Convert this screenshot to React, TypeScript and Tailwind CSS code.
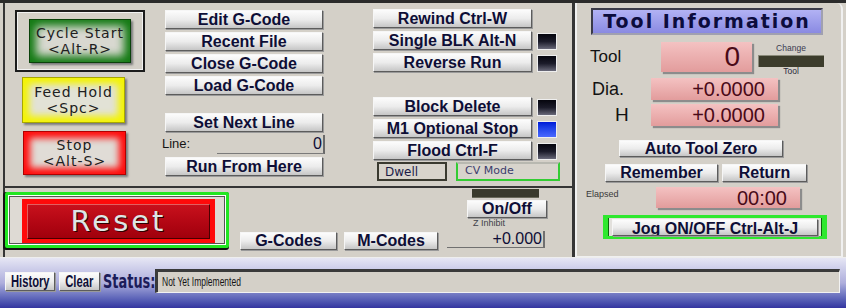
const btn =
  "flex items-center justify-center whitespace-nowrap overflow-hidden bg-linear-to-b from-[#fcfcfc] via-[#ececec] to-[#c6c6c6] border border-[#f6f6f6] border-r-[#5c5c5c] border-b-[#5c5c5c] shadow-[1px_1px_0_#9a9a9a] text-[16px] font-bold leading-none text-[#0e0e36]";

function Btn({ label, className }: { label: string; className: string }) {
  return <div className={`${btn} ${className}`}>{label}</div>;
}

function Led({ blue }: { blue?: boolean }) {
  return (
    <div
      className={
        blue
          ? "ml-[5px] w-[20px] h-[17px] border border-[#eeeeee] bg-linear-to-b from-[#0018d8] to-[#4a68ff]"
          : "ml-[5px] w-[20px] h-[17px] border border-[#eeeeee] bg-linear-to-b from-[#06060e] via-[#1c1c2a] to-[#6a6a7a]"
      }
    />
  );
}

function Dro({ value, className }: { value: string; className: string }) {
  return (
    <div
      className={`flex items-center justify-end bg-linear-to-b from-[#f4c2c2] to-[#e29c9c] shadow-[2px_2px_1px_#8c8c8c] text-[#4a0a18] leading-none ${className}`}
    >
      {value}
    </div>
  );
}

export default function App() {
  const colC = [
    { label: "Rewind Ctrl-W", mt: "mt-[6px]", led: false },
    { label: "Single BLK Alt-N", mt: "mt-[3px]", led: true },
    { label: "Reverse Run", mt: "mt-[3px]", led: true },
    { label: "Block Delete", mt: "mt-[25px]", led: true },
    { label: "M1 Optional Stop", mt: "mt-[3px]", led: true, blue: true },
    { label: "Flood Ctrl-F", mt: "mt-[3px]", led: true },
  ];

  return (
    <div className="w-[846px] h-[308px] overflow-hidden bg-[#d4d0c8] font-['Liberation_Sans',Arial,sans-serif] flex flex-col">
      <div className="flex h-[257px] border-t-[3px] border-[#2b2b2b]">
        {/* left column */}
        <div className="w-[575px] flex flex-col pl-[3px]">
          {/* program run panel */}
          <div className="h-[185px] flex border-l-2 border-r-[3px] border-b-2 border-[#353535]">
            {/* big buttons */}
            <div className="ml-[10px] w-[130px] flex flex-col font-['DejaVu_Sans',sans-serif] text-[14px] leading-[16px] tracking-[1px] text-[#202020]">
              <div className="mt-[7px] h-[62px] border-2 border-[#1c1c1c] shadow-[inset_0_0_0_1px_#f2f2f2] flex items-center justify-center">
                <div className="w-[102px] h-[44px] flex flex-col items-center justify-center border border-[#0b420b] bg-[#d8d8d0] shadow-[inset_0_0_9px_6px_#137a13,2px_2px_2px_#7a7a7a]">
                  <span>Cycle Start</span>
                  <span>&lt;Alt-R&gt;</span>
                </div>
              </div>
              <div className="mt-[5px] ml-[7px] w-[103px] h-[46px] flex flex-col items-center justify-center border border-[#a8a800] bg-[#e2e2d6] shadow-[inset_0_0_7px_6px_#f4f400,2px_2px_2px_#7a7a7a]">
                <span>Feed Hold</span>
                <span>&lt;Spc&gt;</span>
              </div>
              <div className="mt-[8px] ml-[8px] w-[103px] h-[44px] flex flex-col items-center justify-center border border-[#b00000] bg-[#e0dcd6] shadow-[inset_0_0_7px_6px_#ff0a0a,2px_2px_2px_#7a7a7a]">
                <span>Stop</span>
                <span>&lt;Alt-S&gt;</span>
              </div>
            </div>

            {/* file buttons */}
            <div className="ml-[20px] w-[160px] flex flex-col">
              <Btn label="Edit G-Code" className="mt-[7px] w-[158px] h-[19px]" />
              <Btn label="Recent File" className="mt-[3px] w-[158px] h-[19px]" />
              <Btn label="Close G-Code" className="mt-[3px] w-[158px] h-[19px]" />
              <Btn label="Load G-Code" className="mt-[3px] w-[158px] h-[19px]" />
              <Btn label="Set Next Line" className="mt-[18px] w-[158px] h-[19px]" />
              <div className="flex h-[22px] items-end">
                <span className="-ml-[3px] w-[55px] text-[13px] leading-[20px] text-[#141414]">Line:</span>
                <div className="flex-1 h-[19px] border-b border-r-2 border-[#6a6a6a] border-b-[#7a7a7a] flex items-center justify-end pr-[1px] text-[16px] leading-none text-[#0e0e36]">
                  0
                </div>
              </div>
              <Btn label="Run From Here" className="mt-[3px] w-[158px] h-[19px]" />
            </div>

            {/* modes */}
            <div className="ml-[48px] flex flex-col">
              {colC.map((r) => (
                <div key={r.label} className={`flex items-end ${r.mt}`}>
                  <Btn label={r.label} className="w-[159px] h-[19px]" />
                  {r.led && <Led blue={r.blue} />}
                </div>
              ))}
              <div className="mt-[2px] flex h-[19px]">
                <div className="ml-[4px] w-[70px] border-2 border-[#3a3a30] bg-[#d8d4cc] flex items-center pl-[6px] font-['DejaVu_Sans',sans-serif] text-[12px] text-[#1c1c48]">
                  Dwell
                </div>
                <div className="ml-[9px] w-[104px] border-2 border-[#33cc33] border-t-[#b8b8b0] bg-[#d8d4cc] flex items-center pl-[7px] font-['DejaVu_Sans',sans-serif] text-[11px] text-[#3c3c6c]">
                  CV Mode
                </div>
              </div>
            </div>
          </div>

          {/* reset panel */}
          <div className="flex-1 flex border-l-2 border-r-[3px] border-[#353535]">
            <div className="mt-[4px] w-[224px] h-[56px] border-[3px] border-[#22e622] rounded-[2px] shadow-[inset_0_0_0_1px_#ffffff,inset_0_0_0_2px_#555555,-1px_1px_0_1px_#111111] bg-[#dedad4] pl-[14px] pr-[11px] pt-[4px] pb-[2px]">
              <div className="h-full bg-[#ff0a0a] p-[5px] pb-[4px]">
                <div className="h-full flex items-center justify-center bg-linear-to-b from-[#c8101c] to-[#a0000c] border border-[#e06060] border-r-[#4a0000] border-b-[#4a0000] font-['DejaVu_Sans',sans-serif] text-[29px] leading-none tracking-[3px] text-[#dde6e6] [text-shadow:1px_1px_0_#300000]">
                  Reset
                </div>
              </div>
            </div>
            <Btn label="G-Codes" className="ml-[11px] mt-[44px] w-[97px] h-[18px]" />
            <Btn label="M-Codes" className="ml-[7px] mt-[44px] w-[94px] h-[18px]" />
            <div className="ml-[9px] w-[100px] flex flex-col">
              <div className="mt-[1px] ml-[25px] w-[67px] h-[9px] bg-[#3a3a2c] border-b border-[#6a6a5a]" />
              <Btn label="On/Off" className="mt-[2px] ml-[20px] w-[80px] h-[18px]" />
              <span className="ml-[26px] h-[11px] text-[9px] leading-[11px] text-[#404048]">Z Inhibit</span>
              <div className="mt-[2px] w-[98px] h-[17px] border-b border-r-2 border-[#707070] flex items-center justify-end pr-[1px] text-[16px] leading-none text-[#0e0e36]">
                +0.000
              </div>
            </div>
          </div>
        </div>

        {/* tool information */}
        <div className="w-[268px] flex flex-col border-l-2 border-r-2 border-b border-[#f0f0f0] rounded-tr-[6px]">
          <div className="ml-[14px] mt-[5px] w-[232px] h-[27px] flex items-center justify-center bg-linear-to-b from-[#b2b2f4] to-[#8a8ae2] border-2 border-[#3a3a48] border-r-[#a0a0b0] border-b-[#a0a0b0] font-['DejaVu_Sans',sans-serif] font-bold text-[19px] leading-none tracking-[2px] text-[#0c0c3c]">
            Tool Information
          </div>

          <div className="mt-[7px] h-[30px] flex">
            <span className="ml-[13px] w-[71px] text-[17px] leading-[30px] text-[#121212]">Tool</span>
            <Dro value="0" className="w-[91px] h-[30px] pr-[12px] text-[28px]" />
            <div className="ml-[6px] w-[66px] h-[30px] flex flex-col items-center overflow-visible">
              <span className="shrink-0 mt-[1px] text-[8.5px] leading-[10px] text-[#3a3a50]">Change</span>
              <div className="shrink-0 mt-[2px] w-[66px] h-[12px] bg-[#3c3c2c] border-t border-l border-[#8a8a7a] border-r-[#e0e0d8] border-b-[#e0e0d8]" />
              <span className="shrink-0 text-[8.5px] leading-[9px] text-[#2a2a3a]">Tool</span>
            </div>
          </div>

          <div className="mt-[6px] h-[22px] flex">
            <span className="ml-[15px] w-[59px] text-[18px] leading-[22px] text-[#121212]">Dia.</span>
            <Dro value="+0.0000" className="w-[127px] h-[22px] pr-[13px] text-[20px]" />
          </div>

          <div className="mt-[4px] h-[22px] flex">
            <span className="ml-[38px] w-[36px] text-[19px] leading-[22px] text-[#121212]">H</span>
            <Dro value="+0.0000" className="w-[127px] h-[22px] pr-[13px] text-[20px]" />
          </div>

          <Btn label="Auto Tool Zero" className="mt-[14px] ml-[42px] w-[164px] h-[17px]" />

          <div className="mt-[7px] flex">
            <Btn label="Remember" className="ml-[28px] w-[113px] h-[18px]" />
            <Btn label="Return" className="ml-[4px] w-[85px] h-[18px]" />
          </div>

          <div className="mt-[5px] h-[21px] flex">
            <span className="ml-[9px] w-[70px] text-[9px] leading-[14px] text-[#3a3a3a]">Elapsed</span>
            <Dro value="00:00" className="w-[144px] h-[21px] pr-[13px] text-[20px]" />
          </div>

          <div className="mt-[7px] ml-[26px] w-[224px] h-[24px] border-[3px] border-x-[5px] border-[#2ee82e] shadow-[inset_1px_0_0_#0a6a0a,inset_-1px_0_0_#0a6a0a] bg-[#e2e0dc] px-[4px] flex items-center">
            <Btn label="Jog ON/OFF Ctrl-Alt-J" className="w-full h-[17px] items-start pt-[1px]" />
          </div>
        </div>
      </div>

      {/* status bar */}
      <div className="flex-1 border-t border-[#eeeeee] bg-linear-to-b from-[#e6e6f4] via-[#aeaedc] to-[#3434a0]">
        <div className="mt-[11px] h-[24px] flex items-center">
          <div className={`${btn} ml-[5px] w-[50px] h-[19px] font-normal`}>
            <span className="inline-block scale-x-[0.66] font-bold text-[17px]">History</span>
          </div>
          <div className={`${btn} ml-[4px] w-[41px] h-[19px] font-normal`}>
            <span className="inline-block scale-x-[0.66] font-bold text-[17px]">Clear</span>
          </div>
          <div className="ml-[3px] w-[52px] h-[24px] flex items-center overflow-visible">
            <span className="inline-block origin-left scale-x-[0.68] whitespace-nowrap font-['DejaVu_Sans',sans-serif] font-bold text-[19px] leading-none text-[#1c1c5a]">
              Status:
            </span>
          </div>
          <div className="w-[685px] h-[24px] bg-[#d4d0c8] border-t-[3px] border-l-[3px] border-[#3a3a3a] border-r border-b border-r-[#f2f2f2] border-b-[#f2f2f2] flex items-center pl-[4px]">
            <span className="inline-block origin-left scale-x-[0.68] whitespace-nowrap text-[12.5px] text-[#141414]">
              Not Yet Implemented
            </span>
          </div>
        </div>
      </div>
    </div>
  );
}
